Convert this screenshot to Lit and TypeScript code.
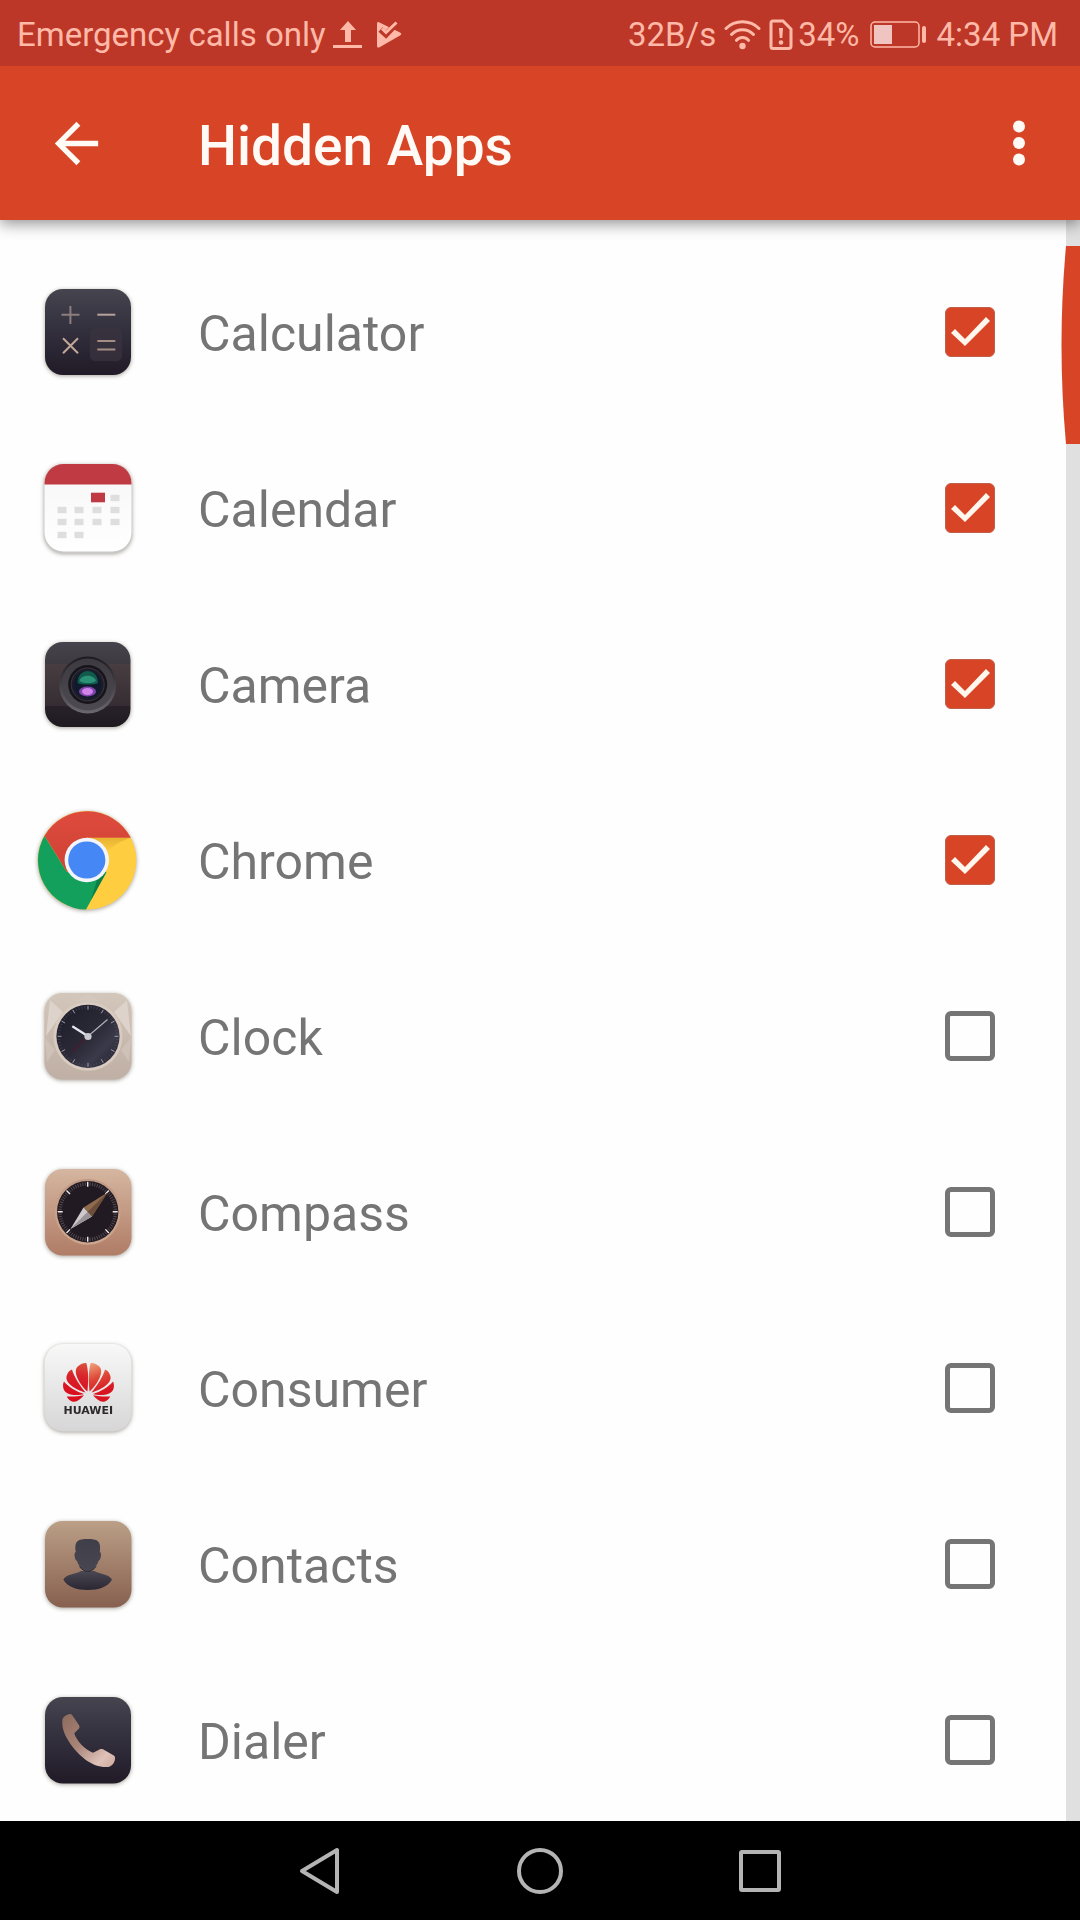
import { LitElement, html, svg, css } from "lit";
import { customElement, property, state } from "lit/decorators.js";

interface AppEntry {
  id: string;
  name: string;
  hidden: boolean;
}

const tick = (cx: number, cy: number, outer: number, inner: number, deg: number) => {
  const a = (deg * Math.PI) / 180;
  const c = Math.cos(a);
  const s = Math.sin(a);
  return `M${cx + outer * c} ${cy + outer * s}L${cx + inner * c} ${cy + inner * s}`;
};

const ticks = (cx: number, cy: number, outer: number, inner: number, count: number) =>
  Array.from({ length: count }, (_, i) => tick(cx, cy, outer, inner, (i * 360) / count)).join("");

const darkTile = svg`
  <linearGradient id="dark" x1="0" y1="0" x2="0" y2="1">
    <stop offset="0" stop-color="#45444f"/><stop offset=".5" stop-color="#322f3c"/><stop offset="1" stop-color="#211a27"/>
  </linearGradient>`;

const calendarCells: Array<[number, number]> = [
  [82, 44],
  [29, 56], [46, 56], [64, 56], [82, 56],
  [29, 68], [46, 68], [64, 68], [82, 68],
  [29, 81], [46, 81],
];

const petals = svg`
  <path d="M54.400 57.500C47 51 38.500 37 45.300 32C48 29.500 51.500 28.500 53.300 29C55.500 36 55.600 47 54.400 57.500Z"/>
  <path d="M52.500 58.500C43 56 30 48.500 34.200 40.500C35 38 37 36.200 39 35.500C40.500 42 47.500 52.500 52.500 58.500Z"/>
  <path d="M51 60C44 62 31.500 61.500 30.300 54C29.800 51 30 49.500 31 47.500C35 52.500 44 58 51 60Z"/>
  <path d="M51 61.300C47 66 43 69 38.500 67.200C36 66 34.500 64 33.800 62.400C39 63 45 62.300 51 61.300Z"/>`;

const art: Record<string, unknown> = {
  calculator: svg`
    <defs>${darkTile}</defs>
    <rect x="12" y="11" width="86" height="86" rx="18" fill="url(#dark)"/>
    <rect x="57" y="50" width="32" height="33" rx="5" fill="#3a3340" opacity=".7"/>
    <g fill="none" stroke="#a58d86" stroke-width="2">
      <path d="M28.500 36.700h18M37.400 28v18" stroke="#8d7d7c"/>
      <path d="M64.300 36.700h18" stroke="#b8a39c"/>
      <path d="M30 60.300l15 15M45 60.300l-15 15" stroke="#c2a698"/>
      <path d="M64.300 63h18M64.300 71.500h18"/>
    </g>`,
  calendar: svg`
    <defs>
      <clipPath id="tile"><rect x="11.500" y="10" width="87" height="87.500" rx="19"/></clipPath>
      <linearGradient id="paper" x1="0" y1="0" x2="0" y2="1"><stop offset="0" stop-color="#f6f6f6"/><stop offset="1" stop-color="#fff"/></linearGradient>
    </defs>
    <rect x="11" y="10" width="88" height="89" rx="19.500" fill="#c9c9c9"/>
    <g clip-path="url(#tile)">
      <rect x="11" y="10" width="88" height="88" fill="url(#paper)"/>
      <rect x="11" y="10" width="88" height="20.500" fill="#bf3a43"/>
    </g>
    <rect x="58" y="38.700" width="14" height="9.600" fill="#bf3a43"/>
    ${calendarCells.map(([x, y]) => svg`<rect x=${x - 4.5} y=${y - 3.2} width="9" height="6.400" fill="#dedede"/>`)}`,
  camera: svg`
    <defs>
      <linearGradient id="cam" x1="0" y1="0" x2="0" y2="1">
        <stop offset="0" stop-color="#45434b"/><stop offset=".26" stop-color="#3e3a42"/><stop offset=".26" stop-color="#483e41"/>
        <stop offset=".75" stop-color="#352d33"/><stop offset=".75" stop-color="#282129"/><stop offset="1" stop-color="#1e1a20"/>
      </linearGradient>
      <linearGradient id="barrel" x1="0" y1="0" x2="0" y2="1"><stop offset="0" stop-color="#1d1a1f"/><stop offset="1" stop-color="#6b6870"/></linearGradient>
      <linearGradient id="throat" x1="0" y1="0" x2="0" y2="1"><stop offset="0" stop-color="#3d3a41"/><stop offset="1" stop-color="#4d4a52"/></linearGradient>
    </defs>
    <rect x="12" y="12" width="85.500" height="85" rx="18" fill="url(#cam)"/>
    <circle cx="54.700" cy="55" r="28.500" fill="url(#barrel)"/>
    <circle cx="54.700" cy="54.500" r="26" fill="url(#throat)"/>
    <circle cx="54.700" cy="54.500" r="19.500" fill="#17141a"/>
    <circle cx="54.700" cy="54.500" r="16.500" fill="#1b1d2a" stroke="#3a3742" stroke-width="1"/>
    <circle cx="54.700" cy="54.500" r="13.500" fill="#101a2c"/>
    <path d="M44.500 53c0-16 20.500-16 20.500 0c-3 2-17.500 2-20.500 0Z" fill="#125a4c"/>
    <path d="M46.500 50.500c2-6.500 14-6.500 16.500 0c-2 3.500-14.500 3.500-16.500 0Z" fill="#2b9277"/>
    <ellipse cx="54.500" cy="61.500" rx="8.500" ry="5" fill="#7f44a8"/>
    <ellipse cx="54.500" cy="61.500" rx="5.500" ry="3.400" fill="#d183ea"/>`,
  chrome: svg`
    <defs>
      <linearGradient id="redshade" x1="0" y1="0" x2="0" y2="1"><stop offset="0" stop-color="#dd4b3e"/><stop offset="1" stop-color="#cf4233"/></linearGradient>
      <linearGradient id="yshade" x1="0" y1="0" x2="0" y2="1"><stop offset="0" stop-color="#e8b232"/><stop offset="1" stop-color="#ffcd40"/></linearGradient>
    </defs>
    <circle cx="54" cy="54.300" r="49.300" fill="#ffcd40"/>
    <path d="M54 31.700H97.300L85 37L73.500 46Z" fill="url(#yshade)"/>
    <path d="M11.500 29.700A49.300 49.300 0 0 0 53 103.600L73.500 66L54 54L34 66Z" fill="#12a05c"/>
    <path d="M58 94L73.500 66L64 74Z" fill="#0c7f48"/>
    <path d="M11.500 29.700A49.300 49.300 0 0 1 97.800 31.700H54V54L34 66Z" fill="url(#redshade)"/>
    <circle cx="53.800" cy="54" r="22.200" fill="#f4f5fa"/>
    <circle cx="53.800" cy="54" r="18.600" fill="#4587f4"/>`,
  clock: svg`
    <defs>
      <linearGradient id="stone" x1="0" y1="0" x2="0" y2="1"><stop offset="0" stop-color="#d3c6ba"/><stop offset="1" stop-color="#bfafa5"/></linearGradient>
      <linearGradient id="face" x1="0" y1="0" x2="1" y2="1"><stop offset="0" stop-color="#1b1b29"/><stop offset=".5" stop-color="#2b2936"/><stop offset=".72" stop-color="#3b3a4a"/><stop offset="1" stop-color="#1d1b29"/></linearGradient>
    </defs>
    <rect x="11.500" y="11" width="87" height="86.500" rx="18" fill="url(#stone)"/>
    <path d="M17 18L30 30L13 54ZM94 18L81 30L98 54Z" fill="#ddd3ca"/>
    <path d="M43 19L55 12L67 19ZM12 56L22 68L14 80ZM98 56L88 68L96 80Z" fill="#d8ccc3" opacity=".5"/>
    <circle cx="55" cy="54.300" r="34.500" fill="#d9cbc0"/>
    <circle cx="55" cy="54.300" r="31.600" fill="url(#face)"/>
    <path d=${ticks(55, 54.3, 30.5, 28, 60)} stroke="#55535f" stroke-width=".6"/>
    <path d=${ticks(55, 54.3, 30.5, 26.5, 12)} stroke="#a9a6ae" stroke-width=".9"/>
    <path d="M55 54.300L39 70" stroke="#4a1c30" stroke-width="1.200"/>
    <path d="M55 54.300L74.500 37.500" stroke="#aab0ba" stroke-width="1.200"/>
    <path d="M55 54.300L39.300 44.300" stroke="#e4e8ee" stroke-width="2.200"/>
    <circle cx="55" cy="54.500" r="3.600" fill="#c9cbd2"/>`,
  compass: svg`
    <defs>
      <linearGradient id="copper" x1="0" y1="0" x2="0" y2="1"><stop offset="0" stop-color="#d5b6a0"/><stop offset="1" stop-color="#b07c66"/></linearGradient>
      <linearGradient id="lip" x1="0" y1="0" x2="0" y2="1"><stop offset="0" stop-color="#c09a84"/><stop offset="1" stop-color="#cda68f"/></linearGradient>
    </defs>
    <rect x="12" y="11" width="86.500" height="86.500" rx="18" fill="url(#copper)"/>
    <circle cx="54.700" cy="53.700" r="33" fill="url(#lip)"/>
    <circle cx="54.700" cy="53.700" r="30.700" fill="#221a22"/>
    <path d=${ticks(54.7, 53.7, 29.5, 26, 72)} stroke="#6b6167" stroke-width=".7"/>
    <path d=${ticks(54.7, 53.7, 30, 25, 8)} stroke="#f0e9e6" stroke-width="1.400"/>
    <path d="M74.500 34.500L50.500 49.500L59 58.500Z" fill="#8e6a4e"/>
    <path d="M37.500 71L50.500 49.500L59 58.500Z" fill="#cfc9cb"/>
    <path d="M37.500 71L54.700 53.700L59 58.500Z" fill="#9a9498"/>
    <path d="M74.500 34.500L54.700 53.700L59 58.500Z" fill="#6d4e38"/>`,
  consumer: svg`
    <defs>
      <linearGradient id="silver" x1="0" y1="0" x2="0" y2="1"><stop offset="0" stop-color="#f8f8f8"/><stop offset="1" stop-color="#d6d6d6"/></linearGradient>
      <linearGradient id="petal" gradientUnits="userSpaceOnUse" x1="55" y1="29" x2="50" y2="60"><stop offset="0" stop-color="#d9553f"/><stop offset=".45" stop-color="#d8242b"/><stop offset="1" stop-color="#d90f1f"/></linearGradient>
      <linearGradient id="petal2" gradientUnits="userSpaceOnUse" x1="53" y1="29" x2="42" y2="58"><stop offset="0" stop-color="#f0a37c"/><stop offset=".5" stop-color="#de4a38"/><stop offset="1" stop-color="#d91422"/></linearGradient>
    </defs>
    <rect x="11.500" y="10" width="87" height="87.500" rx="19" fill="url(#silver)"/>
    <g fill="url(#petal)">${petals}</g>
    <g fill="url(#petal2)" transform="translate(111 0) scale(-1 1)">${petals}</g>
    <text class="brand" x="55.300" y="79.500" text-anchor="middle">HUAWEI</text>`,
  contacts: svg`
    <defs>
      <linearGradient id="tan" x1="0" y1="0" x2="0" y2="1"><stop offset="0" stop-color="#bb9f87"/><stop offset="1" stop-color="#87604f"/></linearGradient>
      <linearGradient id="bust" x1="0" y1="0" x2="0" y2="1"><stop offset="0" stop-color="#4a4853"/><stop offset="1" stop-color="#2a2632"/></linearGradient>
      <linearGradient id="head" x1="0" y1="0" x2="0" y2="1"><stop offset="0" stop-color="#403e48"/><stop offset="1" stop-color="#484650"/></linearGradient>
    </defs>
    <rect x="12" y="11" width="86.500" height="86.500" rx="18" fill="url(#tan)"/>
    <path d="M48 61C42 64.500 33.500 64 30.300 69.500C34 77 44 80 54.700 80S75.500 77 79 69.500C75.500 64 67.500 64.500 61.500 61Z" fill="url(#bust)"/>
    <path d="M42.800 42C41 30.500 45.500 29 54.700 29S68.500 30.500 66.800 42C69 42.500 68 50 65.500 51C63.500 57 59.500 61 54.700 61S46 57 44 51C41.500 50 40.500 42.500 42.800 42Z" fill="url(#head)"/>
    <path d="M46.500 56.500C49 60 52 61.300 54.700 61.300S60.500 60 63 56.500" fill="none" stroke="#2a2730" stroke-width="1"/>`,
  dialer: svg`
    <defs>
      ${darkTile}
      <linearGradient id="handset" x1="0" y1="0" x2="1" y2="1"><stop offset="0" stop-color="#8c6a5c"/><stop offset=".45" stop-color="#a98578"/><stop offset=".8" stop-color="#e0c2b9"/><stop offset="1" stop-color="#cda79b"/></linearGradient>
    </defs>
    <rect x="12" y="11" width="86" height="86.500" rx="18" fill="url(#dark)"/>
    <path d="M29.500 33C30.500 30.500 34.500 28 37.500 28C39 28.500 40 30 40.800 31.500L46.200 39.500C46.800 41 46.500 42 45.500 43L41.300 47.300C43.500 55 52 63.500 60 66.800L66.500 63.400C67.500 62.800 69 62.800 70 63.300L80.800 69.500C82 70.300 82.300 71.500 82 73C81.500 77 79 80 75.500 81C60 82.500 47 70 40.500 62C33 52.500 28 43 29.500 33Z" fill="url(#handset)"/>`,
};

@customElement("app-icon")
class AppIcon extends LitElement {
  @property() name = "";

  static styles = css`
    :host { display: block; }
    .icon {
      display: block;
      width: 108px;
      height: 108px;
      filter: drop-shadow(0 1px 2px rgba(60, 50, 30, 0.45));
    }
    .brand { font: bold 11px "DejaVu Sans", "Liberation Sans", sans-serif; fill: #2c2a2a; }
  `;

  render() {
    return html`<svg class="icon" viewBox="0 0 108 108" aria-hidden="true">${art[this.name]}</svg>`;
  }
}

@customElement("status-bar")
class StatusBar extends LitElement {
  static styles = css`
    :host {
      display: flex;
      justify-content: space-between;
      align-items: center;
      height: 66px;
      box-sizing: border-box;
      padding: 3px 22px 0 17px;
      background: #bc3727;
      color: #ffb9a8;
      font-size: 33px;
      line-height: 40px;
      white-space: nowrap;
    }
    .side { display: flex; align-items: center; }
    svg { display: block; fill: currentColor; }
    .upload { margin-left: 7px; }
    .play { margin-left: 14px; }
    .cut { fill: none; stroke: #bc3727; stroke-width: 6; }
    .mark { fill: none; stroke: currentColor; stroke-width: 3; }
    .wifi { margin-left: 8px; }
    .sim { margin: 0 5px 0 8px; }
    .battery { margin: 0 10px; }
  `;

  render() {
    return html`
      <div class="side">
        <span>Emergency calls only</span>
        <svg class="upload" width="30" height="28" viewBox="0 0 30 28"><path d="M15 0L23 9H18V21H12V9H7ZM0 24H29V27H0Z"/></svg>
        <svg class="play" width="26" height="28" viewBox="0 0 26 28">
          <path d="M0 2.500Q0 0.500 2 1.200L23 11.500Q25.500 13 23 14.500L3 26Q0 27.500 0 25Z"/>
          <path class="cut" d="M3.500 8.500L9 13.500L21 1"/>
          <path class="mark" d="M5 7.500L9 11.500L19.500 1.500"/>
        </svg>
      </div>
      <div class="side">
        <span>32B/s</span>
        <svg class="wifi" width="37" height="32" viewBox="0 0 37 32">
          <g fill="none" stroke="currentColor" stroke-width="3" stroke-linecap="round">
            <path d="M2 9.500C11 0.500 26 0.500 35 9.500M7.500 15.500C13.500 9 23.500 9 29.500 15.500M12.500 21.300C16 17.500 21 17.500 24.500 21.300"/>
          </g>
          <circle cx="18.500" cy="27" r="3.200"/>
        </svg>
        <svg class="sim" width="24" height="32" viewBox="0 0 24 32">
          <path d="M4 2H14L22 10V27Q22 29.500 19.500 29.500H4Q2 29.500 2 27.500V4Q2 2 4 2Z" fill="none" stroke="currentColor" stroke-width="3"/>
          <path d="M10 9H14L13.300 19H10.700Z"/><circle cx="12" cy="23.500" r="2.300"/>
        </svg>
        <span>34%</span>
        <svg class="battery" width="57" height="28" viewBox="0 0 57 28">
          <rect x="1" y="1" width="48" height="25" rx="4" fill="none" stroke="currentColor" stroke-width="1.500"/>
          <rect x="4" y="4" width="18" height="19" fill="#f0c4c0"/>
          <rect x="52" y="5" width="4" height="17" rx="2"/>
        </svg>
        <span>4:34 PM</span>
      </div>
    `;
  }
}

@customElement("app-root")
class AppRoot extends LitElement {
  @state() private apps: AppEntry[] = [
    { id: "calculator", name: "Calculator", hidden: true },
    { id: "calendar", name: "Calendar", hidden: true },
    { id: "camera", name: "Camera", hidden: true },
    { id: "chrome", name: "Chrome", hidden: true },
    { id: "clock", name: "Clock", hidden: false },
    { id: "compass", name: "Compass", hidden: false },
    { id: "consumer", name: "Consumer", hidden: false },
    { id: "contacts", name: "Contacts", hidden: false },
    { id: "dialer", name: "Dialer", hidden: false },
  ];

  static styles = css`
    :host {
      display: flex;
      flex-direction: column;
      height: 100vh;
      background: #fefefe;
      font-family: Roboto, "Liberation Sans", sans-serif;
    }
    button { border: 0; padding: 0; background: none; color: inherit; cursor: pointer; }
    svg { display: block; }
    .header {
      position: relative;
      z-index: 1;
      flex: none;
      box-shadow: 0 4px 14px rgba(0, 0, 0, 0.42);
    }
    .toolbar {
      display: flex;
      align-items: center;
      height: 154px;
      padding: 0 29px 0 44px;
      background: #d74526;
      color: #fffaf5;
    }
    .back { margin-right: 89px; }
    .title { flex: 1; margin: 0; padding-top: 5px; font-size: 55px; font-weight: 500; line-height: 64px; }
    .content { flex: 1; min-height: 0; display: flex; }
    .list {
      flex: 1;
      min-width: 0;
      margin: 0;
      padding: 24px 0 0;
      list-style: none;
      overflow-y: auto;
      scrollbar-width: none;
    }
    .row {
      display: flex;
      align-items: center;
      height: 176px;
      box-sizing: border-box;
      padding: 0 71px 0 33px;
      cursor: pointer;
    }
    .name { flex: 1; padding: 4px 0 0 57px; color: #757575; font-size: 50px; line-height: 60px; }
    .check {
      appearance: none;
      flex: none;
      width: 50px;
      height: 50px;
      margin: 0;
      box-sizing: border-box;
      border: 5px solid #757575;
      border-radius: 6px;
      cursor: pointer;
    }
    .check:checked { border: 1px solid #c0604a; background: #d74526; }
    .check:checked::before {
      content: "";
      display: block;
      height: 48px;
      background: #fff6ee;
      clip-path: polygon(5px 25px, 9px 21px, 19px 31px, 40px 9px, 44px 13px, 19px 38px);
    }
    .track { position: relative; flex: none; width: 14px; background: #e0e0e0; }
    .thumb { position: absolute; top: 26px; right: 0; fill: #d74526; }
    .nav {
      flex: none;
      display: flex;
      justify-content: center;
      height: 99px;
      background: #000;
      color: #b4b4b4;
    }
    .key { display: grid; place-items: center; width: 220px; }
    .key svg { fill: none; stroke: currentColor; stroke-width: 4; stroke-linejoin: round; }
  `;

  private toggle(id: string) {
    this.apps = this.apps.map((a) => (a.id === id ? { ...a, hidden: !a.hidden } : a));
  }

  render() {
    return html`
      <header class="header">
        <status-bar></status-bar>
        <div class="toolbar">
          <button class="back" aria-label="Back">
            <svg width="65" height="65" viewBox="0 0 24 24" fill="currentColor"><path d="M20 11H7.830l5.590-5.590L12 4l-8 8 8 8 1.410-1.410L7.830 13H20v-2z"/></svg>
          </button>
          <h1 class="title">Hidden Apps</h1>
          <button aria-label="More options">
            <svg width="64" height="64" viewBox="0 0 64 64" fill="currentColor"><circle cx="32" cy="15.500" r="6"/><circle cx="32" cy="32" r="6"/><circle cx="32" cy="48.500" r="6"/></svg>
          </button>
        </div>
      </header>
      <main class="content">
        <ul class="list">
          ${this.apps.map(
            (app) => html`
              <li>
                <label class="row" for=${app.id}>
                  <app-icon name=${app.id}></app-icon>
                  <span class="name">${app.name}</span>
                  <input class="check" type="checkbox" id=${app.id} .checked=${app.hidden} @change=${() => this.toggle(app.id)} />
                </label>
              </li>
            `,
          )}
        </ul>
        <div class="track">
          <svg class="thumb" width="19" height="198" viewBox="0 0 19 198"><path d="M19 0H5Q-4 99 5 198H19Z"/></svg>
        </div>
      </main>
      <nav class="nav">
        <button class="key" aria-label="Back">
          <svg width="48" height="48" viewBox="0 0 48 48"><path d="M41 3V45L6 24Z"/></svg>
        </button>
        <button class="key" aria-label="Home">
          <svg width="48" height="48" viewBox="0 0 48 48"><circle cx="24" cy="24" r="21"/></svg>
        </button>
        <button class="key" aria-label="Recent apps">
          <svg width="48" height="48" viewBox="0 0 48 48"><rect x="5" y="5" width="38" height="38" rx="1"/></svg>
        </button>
      </nav>
    `;
  }
}
